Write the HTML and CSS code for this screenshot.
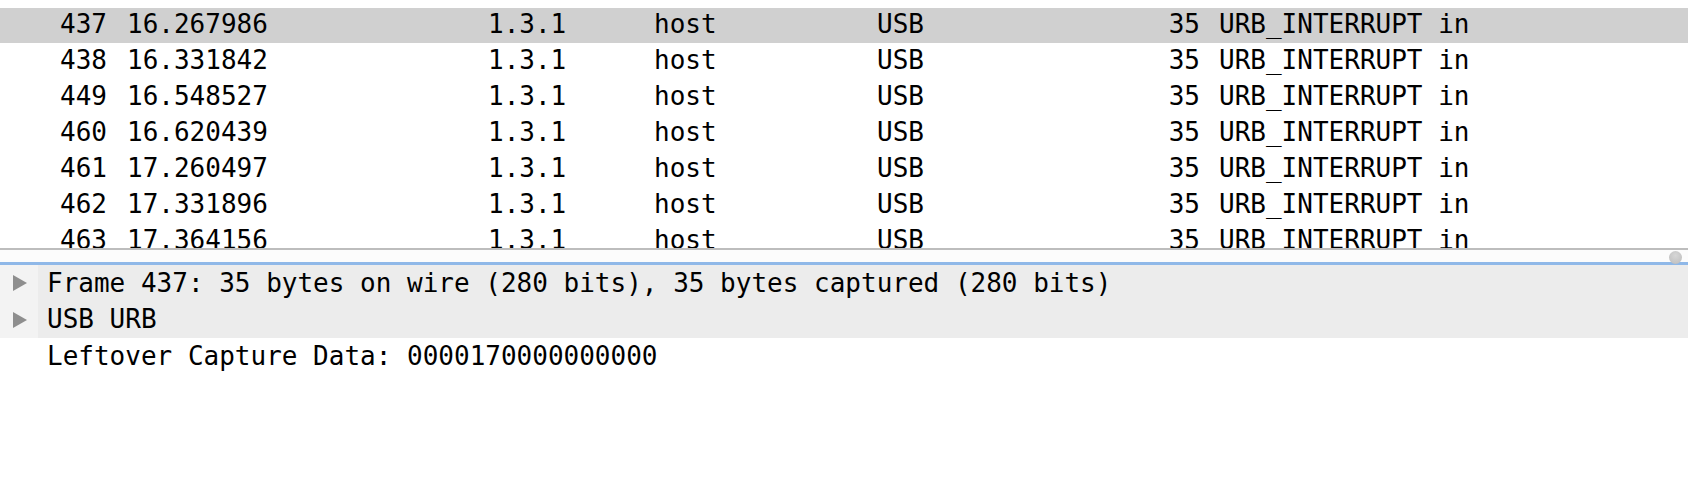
FILE: index.html
```html
<!DOCTYPE html>
<html>
<head>
<meta charset="utf-8">
<link rel="stylesheet" href="styles.css">
</head>
<body>
<div class="app">
  <div class="list">
    <div class="row sel"><span class="c no">437</span><span class="c time">16.267986</span><span class="c src">1.3.1</span><span class="c dst">host</span><span class="c proto">USB</span><span class="c len">35</span><span class="c info">URB_INTERRUPT in</span></div>
    <div class="row"><span class="c no">438</span><span class="c time">16.331842</span><span class="c src">1.3.1</span><span class="c dst">host</span><span class="c proto">USB</span><span class="c len">35</span><span class="c info">URB_INTERRUPT in</span></div>
    <div class="row"><span class="c no">449</span><span class="c time">16.548527</span><span class="c src">1.3.1</span><span class="c dst">host</span><span class="c proto">USB</span><span class="c len">35</span><span class="c info">URB_INTERRUPT in</span></div>
    <div class="row"><span class="c no">460</span><span class="c time">16.620439</span><span class="c src">1.3.1</span><span class="c dst">host</span><span class="c proto">USB</span><span class="c len">35</span><span class="c info">URB_INTERRUPT in</span></div>
    <div class="row"><span class="c no">461</span><span class="c time">17.260497</span><span class="c src">1.3.1</span><span class="c dst">host</span><span class="c proto">USB</span><span class="c len">35</span><span class="c info">URB_INTERRUPT in</span></div>
    <div class="row"><span class="c no">462</span><span class="c time">17.331896</span><span class="c src">1.3.1</span><span class="c dst">host</span><span class="c proto">USB</span><span class="c len">35</span><span class="c info">URB_INTERRUPT in</span></div>
    <div class="row"><span class="c no">463</span><span class="c time">17.364156</span><span class="c src">1.3.1</span><span class="c dst">host</span><span class="c proto">USB</span><span class="c len">35</span><span class="c info">URB_INTERRUPT in</span></div>
  </div>
  <div class="splitter"><span class="handle"></span></div>
  <div class="details">
    <div class="drow shade"><span class="arrow"></span><span class="dtext">Frame 437: 35 bytes on wire (280 bits), 35 bytes captured (280 bits)</span></div>
    <div class="drow shade"><span class="arrow"></span><span class="dtext">USB URB</span></div>
    <div class="drow"><span class="noarrow"></span><span class="dtext">Leftover Capture Data: 0000170000000000</span></div>
  </div>
</div>
</body>
</html>
```

FILE: styles.css
```css
html, body {
  margin: 0;
  padding: 0;
  background: #ffffff;
}
body {
  width: 1688px;
  height: 488px;
  overflow: hidden;
  font-family: "DejaVu Sans Mono", "Liberation Mono", monospace;
  font-size: 26px;
  color: #000;
}
.app {
  display: flex;
  flex-direction: column;
  height: 488px;
}
.list {
  height: 248px;
  overflow: hidden;
  padding-top: 8px;
  box-sizing: border-box;
}
.row {
  display: grid;
  grid-template-columns: 107px 381px 166px 223px 223px 100px 1fr;
  height: 36px;
  line-height: 33px;
  white-space: pre;
}
.row.sel {
  background: #d0d0d0;
  height: 35px;
  margin-bottom: 1px;
}
.c { display: block; }
.no, .len { text-align: right; }
.time { padding-left: 20px; }
.info { padding-left: 19px; }
.splitter {
  position: relative;
  height: 17px;
  box-sizing: border-box;
  border-top: 2px solid #bdbdbd;
  border-bottom: 3px solid #8fb8e8;
  background: #fcfcfc;
}
.handle {
  position: absolute;
  right: 6px;
  top: 1px;
  width: 13px;
  height: 13px;
  border-radius: 50%;
  background: radial-gradient(circle at 50% 35%, #d6d6d6 0%, #c4c4c4 70%, #b4b4b4 100%);
}
.details {
  display: flex;
  flex-direction: column;
}
.drow {
  display: flex;
  align-items: center;
  height: 36.5px;
  line-height: 33px;
  white-space: pre;
}
.drow.shade {
  background: linear-gradient(to right, #f3f3f3 0, #f3f3f3 38px, #ececec 38px);
}
.arrow {
  width: 0;
  height: 0;
  margin-left: 13px;
  margin-right: 20px;
  border-top: 8.5px solid transparent;
  border-bottom: 8.5px solid transparent;
  border-left: 14px solid #8e8e8e;
}
.noarrow {
  width: 47px;
}
.dtext { display: block; }
```
